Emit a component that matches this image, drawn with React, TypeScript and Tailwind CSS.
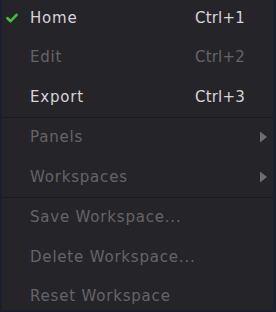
import React from 'react';

type Item = {
  label: string;
  shortcut?: string;
  checked?: boolean;
  disabled?: boolean;
  submenu?: boolean;
};

const groups: Item[][] = [
  [
    { label: 'Home', shortcut: 'Ctrl+1', checked: true },
    { label: 'Edit', shortcut: 'Ctrl+2', disabled: true },
    { label: 'Export', shortcut: 'Ctrl+3' },
  ],
  [
    { label: 'Panels', submenu: true, disabled: true },
    { label: 'Workspaces', submenu: true, disabled: true },
  ],
  [
    { label: 'Save Workspace...', disabled: true },
    { label: 'Delete Workspace...', disabled: true },
    { label: 'Reset Workspace', disabled: true },
  ],
];

const MenuRow: React.FC<{ item: Item }> = ({ item }) => {
  const tone = item.disabled ? 'text-[#656468]' : 'text-[#d6d6d6]';
  return (
    <div className={`relative flex h-[39.5px] items-center pl-[28px] pr-[28px] ${tone}`}>
      {item.checked && (
        <svg className="absolute left-[4px] top-1/2 -translate-y-1/2" width="12" height="10" viewBox="0 0 12 10">
          <path d="M1.5 5.2 L4.6 8.2 L10.5 1.8" fill="none" stroke="#3fc23a" strokeWidth="2.6" strokeLinecap="round" strokeLinejoin="round" />
        </svg>
      )}
      <span className="flex-1">{item.label}</span>
      {item.shortcut && <span className="tracking-[0.2px]">{item.shortcut}</span>}
      {item.submenu && (
        <svg className="absolute right-[6px] top-1/2 -translate-y-1/2" width="7" height="11" viewBox="0 0 7 11">
          <path d="M0 0 L7 5.5 L0 11 Z" fill="#6e6d72" />
        </svg>
      )}
    </div>
  );
};

export default function App() {
  return (
    <div className="h-[312px] w-[276px] overflow-hidden bg-[#1a1f2b]">
      <div
        className="-mt-[2px] ml-[2px] h-[312px] w-[271px] bg-[#252428] text-[15px] tracking-[0.8px]"
        style={{ fontFamily: '"DejaVu Sans", sans-serif' }}
      >
        {groups.map((g, gi) => (
          <div key={gi} className={gi > 0 ? 'border-t border-[#1b1b1e]' : ''}>
            {g.map((item) => (
              <MenuRow key={item.label} item={item} />
            ))}
          </div>
        ))}
      </div>
    </div>
  );
}
